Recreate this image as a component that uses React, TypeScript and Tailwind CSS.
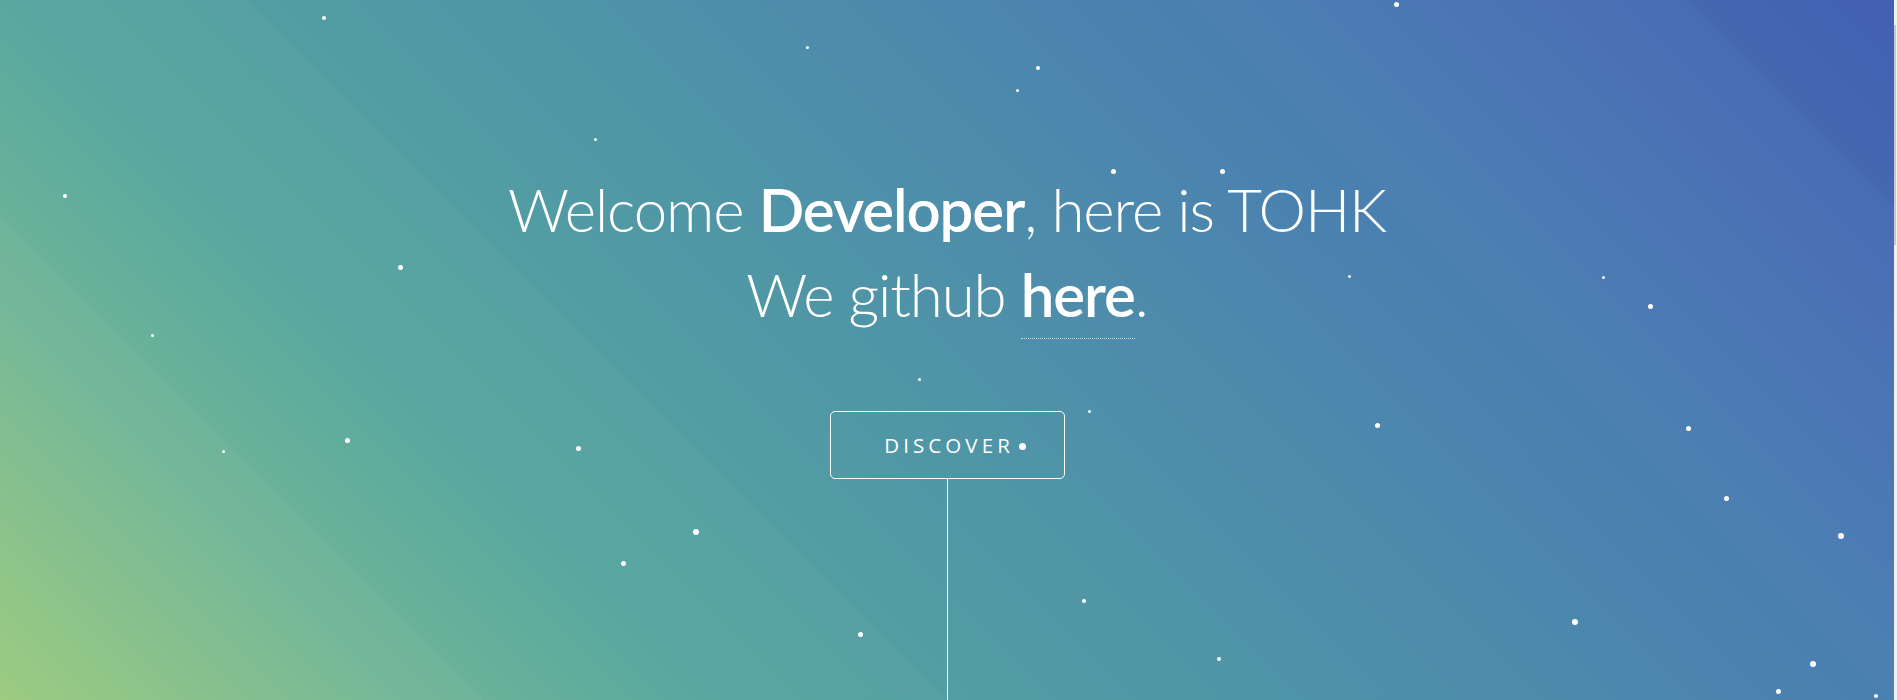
import React from 'react';

const stars: [number, number, number][] = [
  [324, 18, 4], [807, 47, 3], [1038, 68, 4], [1017, 90, 3], [1396, 4, 5],
  [595, 139, 3], [65, 196, 4], [1113, 171, 5], [1222, 171, 5], [400, 267, 5],
  [1349, 276, 3], [1603, 277, 3], [1650, 306, 5], [152, 335, 3], [919, 379, 3],
  [1089, 411, 3], [347, 440, 5], [223, 451, 3], [578, 448, 5], [1022, 446, 7],
  [1377, 425, 5], [1688, 428, 5], [1726, 498, 5], [696, 532, 6], [623, 563, 5],
  [1841, 536, 6], [1084, 601, 4], [860, 634, 5], [1575, 622, 6], [1219, 659, 4],
  [1813, 664, 6], [1778, 691, 5], [1876, 696, 4],
];

export default function App() {
  return (
    <div className="flex h-[700px] w-full overflow-hidden font-['Open_Sans',sans-serif]">
      <main className="relative flex-1 bg-[linear-gradient(45deg,#98c97a_0%,#6cb394_16%,#55a69e_27%,#4f93a8_50%,#4a7fb1_73%,#4461b6_100%)]">
        {/* diagonal bands */}
        <div className="absolute inset-0 bg-[linear-gradient(45deg,rgba(255,255,255,0.05)_0%,rgba(255,255,255,0.05)_18.6%,rgba(255,255,255,0.025)_18.6%,rgba(255,255,255,0.025)_36.5%,rgba(0,0,0,0)_36.5%,rgba(0,0,0,0)_73%,rgba(255,255,255,0.015)_73%,rgba(255,255,255,0.015)_92%,rgba(0,0,0,0.02)_92%)]" />

        {/* stars */}
        {stars.map(([x, y, s], i) => (
          <span
            key={i}
            className="absolute rounded-full bg-white"
            style={{ left: x - s / 2, top: y - s / 2, width: s, height: s }}
          />
        ))}

        <div className="relative flex h-full flex-col items-center pt-[167px] text-white">
          <h1 className="text-center font-['Lato',sans-serif] text-[60px] font-light leading-[85px] tracking-[-1.1px]">
            Welcome <span className="font-semibold">Developer</span>, here is TOHK
            <br />
            We github{' '}
            <a className="border-b border-dotted border-white/70 pb-[8px] font-semibold">here</a>.
          </h1>

          <button className="mt-[74px] h-[68px] w-[235px] rounded-[5px] border-[1.5px] border-white pl-[0.2em] text-[20.5px] tracking-[0.2em] text-white">
            DISCOVER
          </button>
          <div className="w-px flex-1 bg-white" />
        </div>
      </main>

      {/* scrollbar */}
      <div className="flex w-[3px] flex-col bg-[#f1f1f1]">
        <div className="mt-[25px] h-[220px] w-[2px] bg-[#c8c8c8]" />
      </div>
    </div>
  );
}
